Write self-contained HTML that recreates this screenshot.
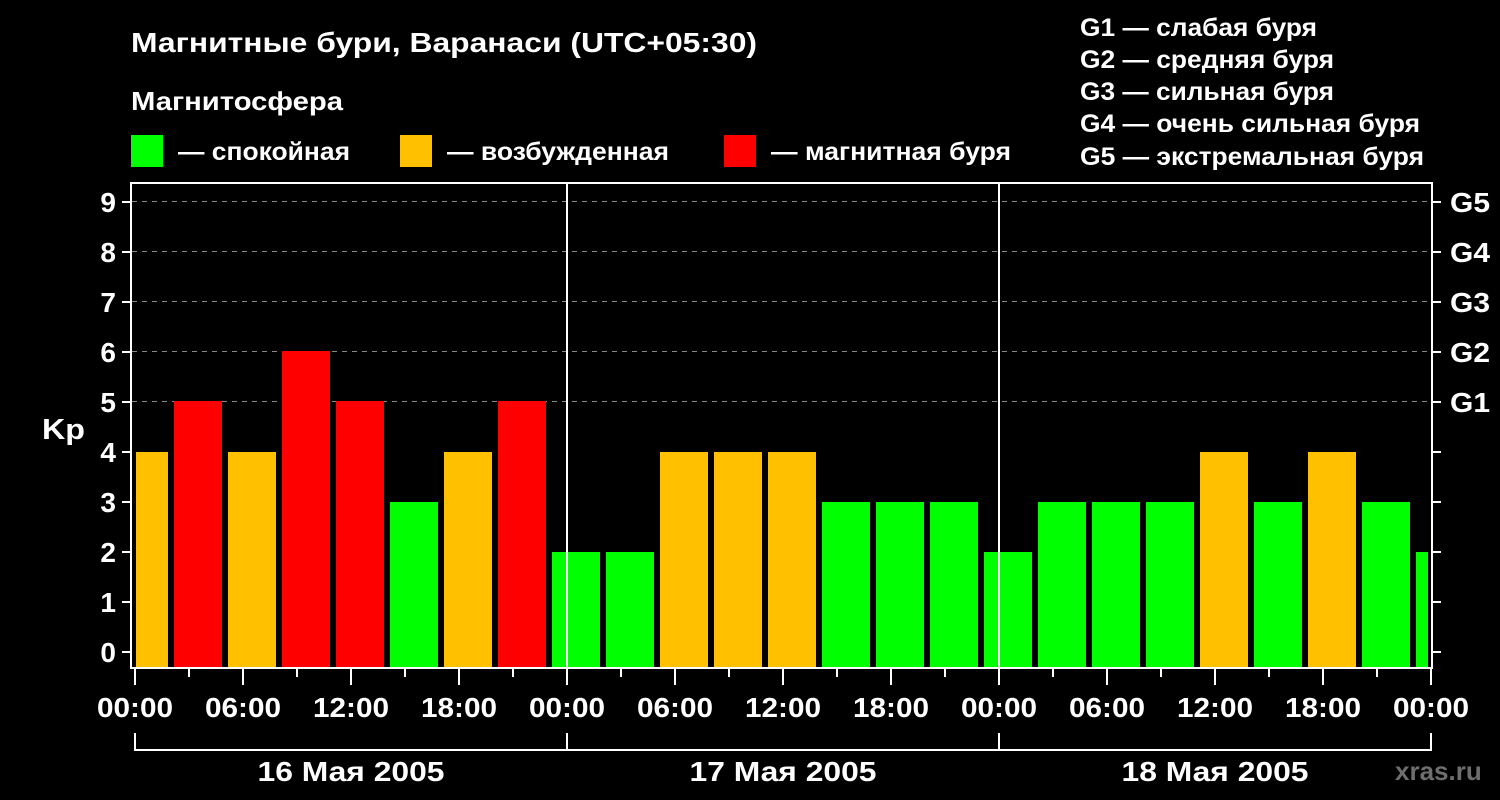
<!DOCTYPE html>
<html><head><meta charset="utf-8"><style>
html,body{margin:0;padding:0;background:#000;width:1500px;height:800px;overflow:hidden}
svg{display:block}
text{font-family:"Liberation Sans",Arial,sans-serif;font-weight:bold;fill:#fff}
</style></head><body>
<svg width="1500" height="800" viewBox="0 0 1500 800" xmlns="http://www.w3.org/2000/svg">
<rect width="1500" height="800" fill="#000"/>
<text x="131" y="52" font-size="28" textLength="626" lengthAdjust="spacingAndGlyphs">Магнитные бури, Варанаси (UTC+05:30)</text>
<text x="131" y="110" font-size="26" textLength="212" lengthAdjust="spacingAndGlyphs">Магнитосфера</text>
<rect x="131" y="135" width="32" height="32" fill="#00ff00"/>
<text x="178" y="160" font-size="25" textLength="172" lengthAdjust="spacingAndGlyphs">— спокойная</text>
<rect x="400" y="135" width="32" height="32" fill="#ffc000"/>
<text x="447" y="160" font-size="25" textLength="222" lengthAdjust="spacingAndGlyphs">— возбужденная</text>
<rect x="724" y="135" width="32" height="32" fill="#ff0000"/>
<text x="771" y="160" font-size="25" textLength="240" lengthAdjust="spacingAndGlyphs">— магнитная буря</text>
<g font-size="25">
<text x="1080" y="36" textLength="237" lengthAdjust="spacingAndGlyphs">G1 — слабая буря</text>
<text x="1080" y="68" textLength="254" lengthAdjust="spacingAndGlyphs">G2 — средняя буря</text>
<text x="1080" y="100" textLength="254" lengthAdjust="spacingAndGlyphs">G3 — сильная буря</text>
<text x="1080" y="132" textLength="340" lengthAdjust="spacingAndGlyphs">G4 — очень сильная буря</text>
<text x="1080" y="165" textLength="344" lengthAdjust="spacingAndGlyphs">G5 — экстремальная буря</text>
</g>
<g stroke="#888" stroke-width="1" stroke-dasharray="5,5">
<line x1="132" x2="1431" y1="201.5" y2="201.5"/>
<line x1="132" x2="1431" y1="251.5" y2="251.5"/>
<line x1="132" x2="1431" y1="301.5" y2="301.5"/>
<line x1="132" x2="1431" y1="351.5" y2="351.5"/>
<line x1="132" x2="1431" y1="401.5" y2="401.5"/>
</g>
<g>
<rect x="136" y="452" width="32" height="216" fill="#ffc000"/>
<rect x="174" y="401" width="48" height="267" fill="#ff0000"/>
<rect x="228" y="452" width="48" height="216" fill="#ffc000"/>
<rect x="282" y="351" width="48" height="317" fill="#ff0000"/>
<rect x="336" y="401" width="48" height="267" fill="#ff0000"/>
<rect x="390" y="502" width="48" height="166" fill="#00ff00"/>
<rect x="444" y="452" width="48" height="216" fill="#ffc000"/>
<rect x="498" y="401" width="48" height="267" fill="#ff0000"/>
<rect x="552" y="552" width="48" height="116" fill="#00ff00"/>
<rect x="606" y="552" width="48" height="116" fill="#00ff00"/>
<rect x="660" y="452" width="48" height="216" fill="#ffc000"/>
<rect x="714" y="452" width="48" height="216" fill="#ffc000"/>
<rect x="768" y="452" width="48" height="216" fill="#ffc000"/>
<rect x="822" y="502" width="48" height="166" fill="#00ff00"/>
<rect x="876" y="502" width="48" height="166" fill="#00ff00"/>
<rect x="930" y="502" width="48" height="166" fill="#00ff00"/>
<rect x="984" y="552" width="48" height="116" fill="#00ff00"/>
<rect x="1038" y="502" width="48" height="166" fill="#00ff00"/>
<rect x="1092" y="502" width="48" height="166" fill="#00ff00"/>
<rect x="1146" y="502" width="48" height="166" fill="#00ff00"/>
<rect x="1200" y="452" width="48" height="216" fill="#ffc000"/>
<rect x="1254" y="502" width="48" height="166" fill="#00ff00"/>
<rect x="1308" y="452" width="48" height="216" fill="#ffc000"/>
<rect x="1362" y="502" width="48" height="166" fill="#00ff00"/>
<rect x="1416" y="552" width="12" height="116" fill="#00ff00"/>
</g>
<line x1="567" x2="567" y1="183" y2="668" stroke="#fff" stroke-width="2"/>
<line x1="999" x2="999" y1="183" y2="668" stroke="#fff" stroke-width="2"/>
<rect x="131" y="183" width="1301" height="485" fill="none" stroke="#fff" stroke-width="2"/>
<g stroke="#fff" stroke-width="2">
<line x1="122" x2="131" y1="652" y2="652"/><line x1="122" x2="131" y1="602" y2="602"/>
<line x1="122" x2="131" y1="552" y2="552"/><line x1="122" x2="131" y1="502" y2="502"/>
<line x1="122" x2="131" y1="452" y2="452"/><line x1="122" x2="131" y1="402" y2="402"/>
<line x1="122" x2="131" y1="352" y2="352"/><line x1="122" x2="131" y1="302" y2="302"/>
<line x1="122" x2="131" y1="252" y2="252"/><line x1="122" x2="131" y1="202" y2="202"/>
<line x1="1432" x2="1441" y1="652" y2="652"/><line x1="1432" x2="1441" y1="602" y2="602"/>
<line x1="1432" x2="1441" y1="552" y2="552"/><line x1="1432" x2="1441" y1="502" y2="502"/>
<line x1="1432" x2="1441" y1="452" y2="452"/><line x1="1432" x2="1441" y1="402" y2="402"/>
<line x1="1432" x2="1441" y1="352" y2="352"/><line x1="1432" x2="1441" y1="302" y2="302"/>
<line x1="1432" x2="1441" y1="252" y2="252"/><line x1="1432" x2="1441" y1="202" y2="202"/>
</g>
<g font-size="28" text-anchor="end">
<text x="116" y="662">0</text><text x="116" y="612">1</text><text x="116" y="562">2</text>
<text x="116" y="512">3</text><text x="116" y="462">4</text><text x="116" y="412">5</text>
<text x="116" y="362">6</text><text x="116" y="312">7</text><text x="116" y="262">8</text>
<text x="116" y="212">9</text>
</g>
<text x="42" y="439" font-size="29" textLength="43" lengthAdjust="spacingAndGlyphs">Kp</text>
<g font-size="28">
<text x="1450" y="412" textLength="40" lengthAdjust="spacingAndGlyphs">G1</text>
<text x="1450" y="362" textLength="40" lengthAdjust="spacingAndGlyphs">G2</text>
<text x="1450" y="312" textLength="40" lengthAdjust="spacingAndGlyphs">G3</text>
<text x="1450" y="262" textLength="40" lengthAdjust="spacingAndGlyphs">G4</text>
<text x="1450" y="212" textLength="40" lengthAdjust="spacingAndGlyphs">G5</text>
</g>
<g stroke="#fff" stroke-width="2">
<line x1="135" x2="135" y1="669" y2="685"/><line x1="189" x2="189" y1="669" y2="677"/>
<line x1="243" x2="243" y1="669" y2="685"/><line x1="297" x2="297" y1="669" y2="677"/>
<line x1="351" x2="351" y1="669" y2="685"/><line x1="405" x2="405" y1="669" y2="677"/>
<line x1="459" x2="459" y1="669" y2="685"/><line x1="513" x2="513" y1="669" y2="677"/>
<line x1="567" x2="567" y1="669" y2="685"/><line x1="621" x2="621" y1="669" y2="677"/>
<line x1="675" x2="675" y1="669" y2="685"/><line x1="729" x2="729" y1="669" y2="677"/>
<line x1="783" x2="783" y1="669" y2="685"/><line x1="837" x2="837" y1="669" y2="677"/>
<line x1="891" x2="891" y1="669" y2="685"/><line x1="945" x2="945" y1="669" y2="677"/>
<line x1="999" x2="999" y1="669" y2="685"/><line x1="1053" x2="1053" y1="669" y2="677"/>
<line x1="1107" x2="1107" y1="669" y2="685"/><line x1="1161" x2="1161" y1="669" y2="677"/>
<line x1="1215" x2="1215" y1="669" y2="685"/><line x1="1269" x2="1269" y1="669" y2="677"/>
<line x1="1323" x2="1323" y1="669" y2="685"/><line x1="1377" x2="1377" y1="669" y2="677"/>
<line x1="1431" x2="1431" y1="669" y2="685"/>
<polyline points="135,733 135,750 1431,750 1431,733" fill="none"/>
<line x1="567" x2="567" y1="733" y2="750"/><line x1="999" x2="999" y1="733" y2="750"/>
</g>
<g font-size="28" text-anchor="middle">
<text x="135" y="717" textLength="76" lengthAdjust="spacingAndGlyphs">00:00</text><text x="243" y="717" textLength="76" lengthAdjust="spacingAndGlyphs">06:00</text><text x="351" y="717" textLength="76" lengthAdjust="spacingAndGlyphs">12:00</text><text x="459" y="717" textLength="76" lengthAdjust="spacingAndGlyphs">18:00</text>
<text x="567" y="717" textLength="76" lengthAdjust="spacingAndGlyphs">00:00</text><text x="675" y="717" textLength="76" lengthAdjust="spacingAndGlyphs">06:00</text><text x="783" y="717" textLength="76" lengthAdjust="spacingAndGlyphs">12:00</text><text x="891" y="717" textLength="76" lengthAdjust="spacingAndGlyphs">18:00</text>
<text x="999" y="717" textLength="76" lengthAdjust="spacingAndGlyphs">00:00</text><text x="1107" y="717" textLength="76" lengthAdjust="spacingAndGlyphs">06:00</text><text x="1215" y="717" textLength="76" lengthAdjust="spacingAndGlyphs">12:00</text><text x="1323" y="717" textLength="76" lengthAdjust="spacingAndGlyphs">18:00</text>
<text x="1431" y="717" textLength="76" lengthAdjust="spacingAndGlyphs">00:00</text>
<text x="351" y="781" textLength="187" lengthAdjust="spacingAndGlyphs">16 Мая 2005</text><text x="783" y="781" textLength="187" lengthAdjust="spacingAndGlyphs">17 Мая 2005</text><text x="1215" y="781" textLength="187" lengthAdjust="spacingAndGlyphs">18 Мая 2005</text>
</g>
<text x="1395" y="780" font-size="26" style="fill:#6e6e6e">xras.ru</text>
</svg>
</body></html>
